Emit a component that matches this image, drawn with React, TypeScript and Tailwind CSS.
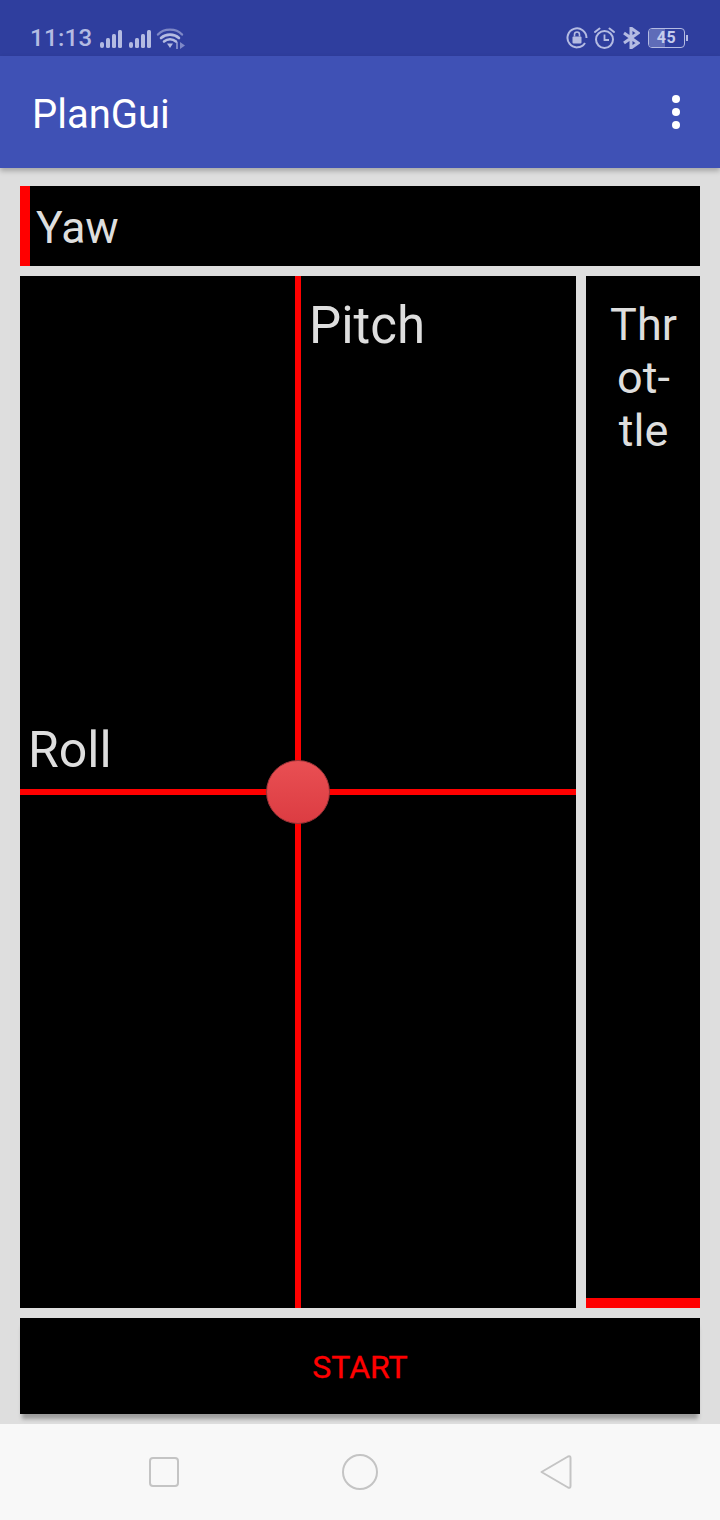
import React from 'react';

const StatusBar = () => (
  <div className="h-14 bg-[#2f3e9e] flex items-end pb-1 pl-[30px] pr-[32px] justify-between text-[#b4bbe2]">
    <div className="flex items-center h-7">
      <span className="w-[68px] text-[24px] leading-7 font-medium tracking-[0.3px]">11:13</span>
      <svg width="92" height="24" viewBox="0 0 92 24" fill="currentColor">
        <rect x="2" y="16" width="4" height="6" rx="2" />
        <rect x="8" y="12" width="4" height="10" rx="1.500" />
        <rect x="14" y="8" width="4" height="14" rx="1.500" />
        <rect x="20" y="4" width="4" height="18" rx="1.500" />
        <rect x="31" y="16" width="4" height="6" rx="2" />
        <rect x="37" y="12" width="4" height="10" rx="1.500" />
        <rect x="43" y="8" width="4" height="14" rx="1.500" />
        <rect x="49" y="4" width="4" height="18" rx="1.500" />
        <g fill="none" stroke="currentColor" strokeLinecap="round">
          <path d="M60 8.500 C66 2 78 2 84 8.500" strokeWidth="2.400" opacity="0.6" />
          <path d="M63 12 C68 7.500 76 7.500 81 12" strokeWidth="2.600" />
          <path d="M66 15.500 C69.500 12.500 74.500 12.500 78 15.500" strokeWidth="2.600" />
        </g>
        <path d="M69 17.500 L75 17.500 L72 22 Z" />
        <path d="M78 23 L78 16 L80 16 L80 23 Z M82 16 L87 19.500 L82 23 Z" opacity="0.6" />
      </svg>
    </div>
    <div className="flex items-center h-7">
      <svg width="22" height="22" viewBox="0 0 22 22" fill="none" stroke="currentColor">
        <path d="M19 16 A9.500 9.500 0 1 1 20.500 11" strokeWidth="2" />
        <rect x="6.500" y="9.500" width="9" height="7" rx="1" fill="currentColor" stroke="none" />
        <path d="M8.500 9.500 V7.500 A2.500 2.500 0 0 1 13.500 7.500 V9.500" strokeWidth="1.600" />
      </svg>
      <svg className="ml-[6px]" width="21" height="22" viewBox="0 0 21 22" fill="none" stroke="currentColor" strokeWidth="2">
        <circle cx="10.500" cy="12.500" r="8.500" />
        <path d="M10.500 7.500 V13 H15" strokeWidth="1.800" />
        <path d="M1 5 L5.500 1.500 M20 5 L15.500 1.500" strokeLinecap="round" />
      </svg>
      <svg className="ml-[7px]" width="18" height="22" viewBox="0 0 18 22" fill="none" stroke="currentColor" strokeWidth="3">
        <path d="M2 6 L16 16 L9 21 V1 L16 6 L2 16" />
      </svg>
      <div className="ml-[8px] relative w-[37px] h-5 rounded-[4px] border border-[#b4bbe2] overflow-hidden flex items-center justify-center">
        <div className="absolute left-0 top-0 bottom-0 w-4 bg-[#5f6cb8]" />
        <span className="relative text-[16px] leading-5 font-bold tracking-[0.5px] text-[#c4cbec]">45</span>
      </div>
      <div className="ml-[1px] w-[2px] h-[6px] bg-[#b4bbe2]" />
    </div>
  </div>
);

const AppBar = () => (
  <div className="relative z-10 h-28 bg-[#3f51b5] flex items-center justify-between pl-[32px] pr-[40px] shadow-[0_3px_5px_rgba(0,0,0,0.25)]">
    <span className="text-[40px] leading-none pt-[5px] text-white">PlanGui</span>
    <div className="flex flex-col gap-[5px]">
      <div className="w-2 h-2 rounded-full bg-white" />
      <div className="w-2 h-2 rounded-full bg-white" />
      <div className="w-2 h-2 rounded-full bg-white" />
    </div>
  </div>
);

const NavBar = () => (
  <div className="h-24 bg-[#f8f8f8] flex items-center justify-between text-[#c4c4c4] pl-[149px] pr-[148px]">
    <svg width="30" height="30" viewBox="0 0 30 30" fill="none" stroke="currentColor" strokeWidth="2">
      <rect x="1" y="1" width="28" height="28" rx="3" />
    </svg>
    <svg width="36" height="36" viewBox="0 0 36 36" fill="none" stroke="currentColor" strokeWidth="2">
      <circle cx="18" cy="18" r="17" />
    </svg>
    <svg width="32" height="36" viewBox="0 0 32 36" fill="none" stroke="currentColor" strokeWidth="2" strokeLinejoin="round">
      <path d="M1.500 18 L28 2.500 Q30.500 1.500 30.500 4 V32 Q30.500 34.500 28 33.500 Z" />
    </svg>
  </div>
);

export default function App() {
  return (
    <div
      className="w-[720px] h-[1520px] overflow-hidden flex flex-col bg-[#dedede]"
      style={{ fontFamily: 'Roboto, sans-serif' }}
    >
      <StatusBar />
      <AppBar />
      <div className="flex-1 flex flex-col gap-[10px] px-5 pt-[18px] pb-[10px] text-[#dedede]">
        {/* Yaw */}
        <div className="h-20 bg-black flex items-center">
          <div className="w-[10px] h-full bg-[#ff0000]" />
          <span className="ml-[6px] pt-[4px] text-[44.500px] leading-none">Yaw</span>
        </div>

        <div className="flex-1 flex gap-[10px]">
          {/* roll / pitch pad */}
          <div className="relative flex-1 bg-black">
            <div className="absolute left-[275px] top-0 bottom-0 w-[6px] bg-[#ff0000]" />
            <div className="absolute left-0 right-0 top-[513px] h-[6px] bg-[#ff0000]" />
            <span className="absolute left-[289px] top-[23px] text-[51px] leading-[53px]">Pitch</span>
            <span className="absolute left-[8px] top-[448px] text-[50px] leading-[53px]">Roll</span>
            <div className="absolute left-[246px] top-[484px] w-16 h-16 rounded-full border border-[#9c3438] bg-gradient-to-b from-[#e94f53] to-[#dc3c42]" />
          </div>
          {/* throttle */}
          <div className="w-[114px] bg-black flex flex-col justify-between">
            <div className="pt-[22px] pl-[1px] text-center text-[45px] leading-[53px]">
              <div>Thr</div>
              <div>ot-</div>
              <div>tle</div>
            </div>
            <div className="h-[10px] bg-[#ff0000]" />
          </div>
        </div>

        {/* start button */}
        <div className="h-24 bg-black flex items-center justify-center pt-[2px] text-[#ff0000] text-[32px] [-webkit-text-stroke:0.3px_#ff0000] shadow-[0_7px_4px_-2px_rgba(0,0,0,0.3)]">
          START
        </div>
      </div>
      <NavBar />
    </div>
  );
}
